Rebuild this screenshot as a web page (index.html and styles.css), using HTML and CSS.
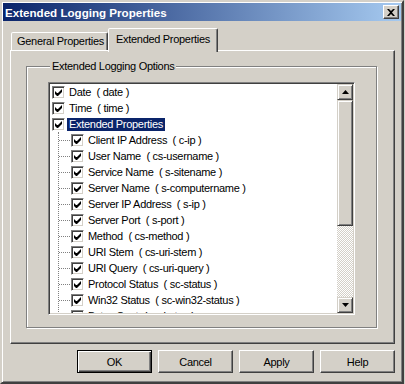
FILE: index.html
```
<!DOCTYPE html>
<html lang="en">
<head>
<meta charset="UTF-8" />
<title>Extended Logging Properties</title>
<link rel="stylesheet" href="styles.css">
</head>
<body>
<svg class="defs" width="0" height="0">
  <symbol id="tick" viewBox="0 0 13 13"><path d="M3 5v3l2 2h1l4-4v-3l-4 4h-1z" fill="#000"/></symbol>
</svg>

<div class="window">
  <div class="titlebar">
    <span class="title">Extended Logging Properties</span>
    <span class="close">
      <svg width="8" height="7" viewBox="0 0 8 7"><path d="M0 0h2l2 2 2-2h2l-3 3.5 3 3.5h-2l-2-2-2 2h-2l3-3.5z" fill="#000"/></svg>
    </span>
  </div>

  <div class="tabs">
    <div class="tab">General Properties</div>
    <div class="tab active">Extended Properties</div>
  </div>

  <div class="panel">
    <fieldset class="group">
      <legend>Extended Logging Options</legend>
      <div class="list">
        <div class="items">
          <div class="row"><span class="check"><svg><use href="#tick"/></svg></span><span class="label">Date&nbsp; ( date )</span></div>
          <div class="row"><span class="check"><svg><use href="#tick"/></svg></span><span class="label">Time&nbsp; ( time )</span></div>
          <div class="row"><span class="check"><svg><use href="#tick"/></svg></span><span class="label selected">Extended Properties</span></div>
          <div class="children">
            <div class="row"><span class="dots"></span><span class="check"><svg><use href="#tick"/></svg></span><span class="label">Client IP Address&nbsp; ( c-ip )</span></div>
            <div class="row"><span class="dots"></span><span class="check"><svg><use href="#tick"/></svg></span><span class="label">User Name&nbsp; ( cs-username )</span></div>
            <div class="row"><span class="dots"></span><span class="check"><svg><use href="#tick"/></svg></span><span class="label">Service Name&nbsp; ( s-sitename )</span></div>
            <div class="row"><span class="dots"></span><span class="check"><svg><use href="#tick"/></svg></span><span class="label">Server Name&nbsp; ( s-computername )</span></div>
            <div class="row"><span class="dots"></span><span class="check"><svg><use href="#tick"/></svg></span><span class="label">Server IP Address&nbsp; ( s-ip )</span></div>
            <div class="row"><span class="dots"></span><span class="check"><svg><use href="#tick"/></svg></span><span class="label">Server Port&nbsp; ( s-port )</span></div>
            <div class="row"><span class="dots"></span><span class="check"><svg><use href="#tick"/></svg></span><span class="label">Method&nbsp; ( cs-method )</span></div>
            <div class="row"><span class="dots"></span><span class="check"><svg><use href="#tick"/></svg></span><span class="label">URI Stem&nbsp; ( cs-uri-stem )</span></div>
            <div class="row"><span class="dots"></span><span class="check"><svg><use href="#tick"/></svg></span><span class="label">URI Query&nbsp; ( cs-uri-query )</span></div>
            <div class="row"><span class="dots"></span><span class="check"><svg><use href="#tick"/></svg></span><span class="label">Protocol Status&nbsp; ( sc-status )</span></div>
            <div class="row"><span class="dots"></span><span class="check"><svg><use href="#tick"/></svg></span><span class="label">Win32 Status&nbsp; ( sc-win32-status )</span></div>
            <div class="row"><span class="dots"></span><span class="check"><svg><use href="#tick"/></svg></span><span class="label">Bytes Sent&nbsp; ( sc-bytes )</span></div>
          </div>
        </div>
        <div class="scrollbar">
          <div class="arrow"><svg width="7" height="4" viewBox="0 0 7 4"><path d="M3.5 0L7 4H0z" fill="#000"/></svg></div>
          <div class="thumb"></div>
          <div class="track"></div>
          <div class="arrow"><svg width="7" height="4" viewBox="0 0 7 4"><path d="M0 0h7L3.5 4z" fill="#000"/></svg></div>
        </div>
      </div>
    </fieldset>
  </div>

  <div class="buttons">
    <button class="btn default">OK</button>
    <button class="btn">Cancel</button>
    <button class="btn">Apply</button>
    <button class="btn">Help</button>
  </div>
</div>
</body>
</html>
```

FILE: styles.css
```
html, body {
  margin: 0;
  padding: 0;
  background: #d4d0c8;
  font-family: "Liberation Sans", Arial, sans-serif;
  font-size: 11px;
  letter-spacing: -0.3px;
  color: #000;
}

.defs {
  display: block;
  width: 0;
  height: 0;
}

.window {
  box-sizing: border-box;
  width: 404px;
  height: 384px;
  padding: 1px;
  border: 2px solid;
  border-color: #d4d0c8 #404040 #404040 #d4d0c8;
  box-shadow: inset 1px 1px #fff, inset -1px -1px #808080;
  background: #d4d0c8;
}

/* title bar */
.titlebar {
  height: 18px;
  display: flex;
  align-items: center;
  justify-content: space-between;
  background: linear-gradient(to right, #0a246a, #a6caf0);
}

.title {
  padding-left: 2px;
  color: #fff;
  font-weight: bold;
  font-size: 11.6px;
  letter-spacing: 0;
}

.close {
  box-sizing: border-box;
  width: 16px;
  height: 14px;
  margin-right: 2px;
  display: flex;
  align-items: center;
  justify-content: center;
  background: #d4d0c8;
  border: 1px solid;
  border-color: #fff #404040 #404040 #fff;
  box-shadow: inset -1px -1px #808080;
}

/* tabs */
.tabs {
  height: 22px;
  margin-top: 7px;
  padding-left: 8px;
  display: flex;
  align-items: flex-end;
}

.tab {
  box-sizing: border-box;
  height: 18px;
  width: 97px;
  padding-left: 5px;
  line-height: 17px;
  white-space: nowrap;
  border: 1px solid;
  border-bottom: none;
  border-color: #fff #404040 transparent #fff;
  border-radius: 2px 2px 0 0;
  box-shadow: inset -1px 0 #808080;
  background: #d4d0c8;
}

.tab.active {
  position: relative;
  z-index: 1;
  width: 110px;
  height: 24px;
  margin-bottom: -2px;
  padding-left: 7px;
  line-height: 20px;
}

/* panel */
.panel {
  box-sizing: border-box;
  width: 385px;
  height: 294px;
  margin-left: 7px;
  border: 1px solid;
  border-color: #fff #404040 #404040 #fff;
  box-shadow: inset -1px -1px #808080;
}

.group {
  box-sizing: border-box;
  width: 351px;
  height: 268px;
  margin: 9px 0 0 15px;
  padding: 0 19px 0 21px;
  border: 1px solid #808080;
  box-shadow: inset 1px 1px #fff, 1px 1px #fff;
}

.group legend {
  margin-left: 2px;
  padding: 0 2px;
  background: #d4d0c8;
}

/* list box */
.list {
  box-sizing: border-box;
  width: 307px;
  height: 233px;
  margin-top: 10px;
  display: flex;
  border: 1px solid;
  border-color: #808080 #fff #fff #808080;
  box-shadow: inset 1px 1px #404040, inset -1px -1px #d4d0c8;
  padding: 1px;
  background: #fff;
}

.items {
  flex: 1;
  overflow: hidden;
}

.row {
  height: 16px;
  display: flex;
  align-items: center;
  padding-left: 2px;
  white-space: nowrap;
}

.check {
  box-sizing: border-box;
  flex: none;
  width: 13px;
  height: 13px;
  border: 1px solid;
  border-color: #808080 #fff #fff #808080;
  box-shadow: inset 1px 1px #404040, inset -1px -1px #d4d0c8;
  background: #fff;
}

.check svg {
  display: block;
  width: 13px;
  height: 13px;
  margin: -1px;
}

.label {
  margin-left: 2px;
  padding: 0 2px;
  line-height: 13px;
}

.label.selected {
  background: #0a246a;
  color: #fff;
}

.children {
  margin-left: 8px;
  border-left: 1px dotted #808080;
}

.children .row {
  padding-left: 0;
}

.dots {
  width: 11px;
  margin-right: 1px;
  border-top: 1px dotted #808080;
}

/* scrollbar */
.scrollbar {
  width: 16px;
  display: flex;
  flex-direction: column;
}

.arrow, .thumb {
  box-sizing: border-box;
  height: 16px;
  display: flex;
  align-items: center;
  justify-content: center;
  background: #d4d0c8;
  border: 1px solid;
  border-color: #d4d0c8 #404040 #404040 #d4d0c8;
  box-shadow: inset 1px 1px #fff, inset -1px -1px #808080;
}

.thumb {
  height: 126px;
}

.track {
  flex: 1;
  background: repeating-conic-gradient(#fff 0 25%, #d4d0c8 0 50%) 0 0 / 2px 2px;
}

/* buttons */
.buttons {
  margin-top: 6px;
  padding-right: 6px;
  display: flex;
  justify-content: flex-end;
  gap: 6px;
}

.btn {
  box-sizing: border-box;
  width: 75px;
  height: 23px;
  padding: 0;
  font: inherit;
  letter-spacing: inherit;
  color: #000;
  background: #d4d0c8;
  border: 1px solid;
  border-color: #fff #404040 #404040 #fff;
  box-shadow: inset -1px -1px #808080;
}

.btn.default {
  border: 1px solid #000;
  box-shadow: inset 1px 1px #fff, inset -1px -1px #404040, inset -2px -2px #808080;
}
```
